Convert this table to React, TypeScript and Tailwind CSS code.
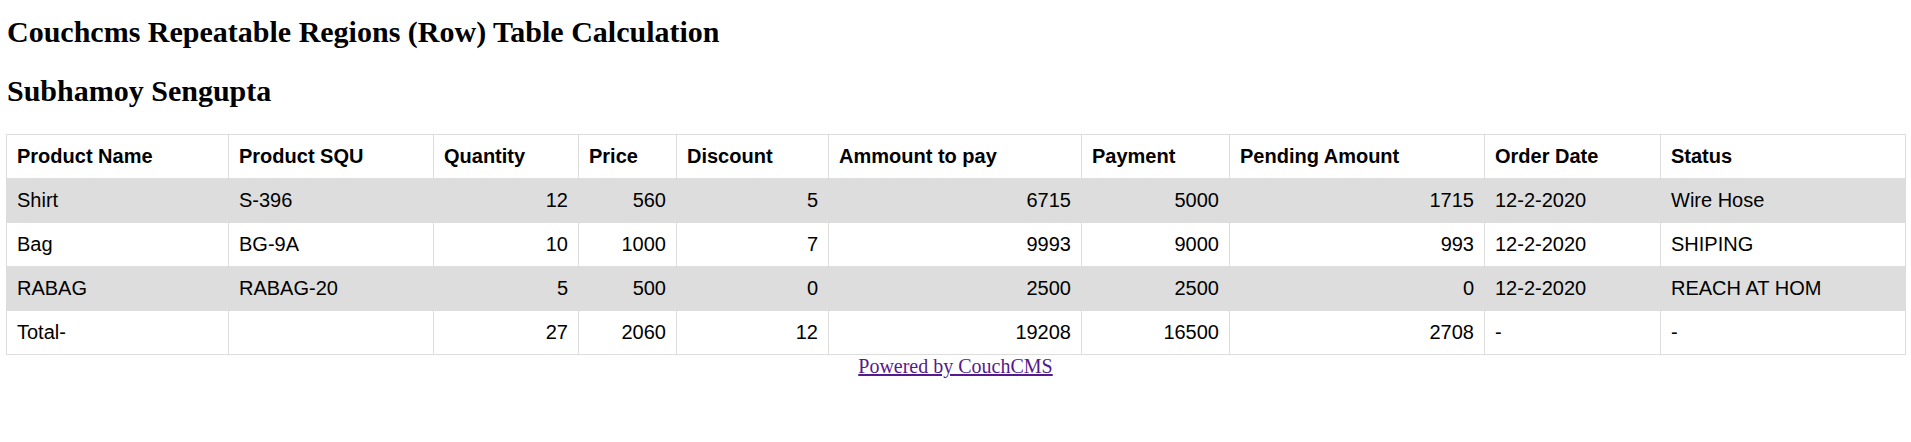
const colClasses = [
  'w-[222px]',
  'w-[205px]',
  'w-[145px]',
  'w-[98px]',
  'w-[152px]',
  'w-[253px]',
  'w-[148px]',
  'w-[255px]',
  'w-[176px]',
  'w-[245px]',
];

const headers = [
  'Product Name',
  'Product SQU',
  'Quantity',
  'Price',
  'Discount',
  'Ammount to pay',
  'Payment',
  'Pending Amount',
  'Order Date',
  'Status',
];

const rows = [
  ['Shirt', 'S-396', '12', '560', '5', '6715', '5000', '1715', '12-2-2020', 'Wire Hose'],
  ['Bag', 'BG-9A', '10', '1000', '7', '9993', '9000', '993', '12-2-2020', 'SHIPING'],
  ['RABAG', 'RABAG-20', '5', '500', '0', '2500', '2500', '0', '12-2-2020', 'REACH AT HOM'],
  ['Total-', '', '27', '2060', '12', '19208', '16500', '2708', '-', '-'],
];

// numeric columns are right aligned
const isNum = (i: number) => i >= 2 && i <= 7;

export default function App() {
  return (
    <div className="min-h-screen bg-white px-[6px] text-black">
      <h2 className="mt-[15px] mb-[25px] px-px font-['Liberation_Serif',serif] text-[30px] font-bold leading-[normal]">
        Couchcms Repeatable Regions (Row) Table Calculation
      </h2>
      <h2 className="mb-[26px] px-px font-['Liberation_Serif',serif] text-[30px] font-bold leading-[normal]">
        Subhamoy Sengupta
      </h2>

      <table className="w-[1899px] table-fixed border-collapse border border-[#dddddd] font-['Liberation_Sans',Arial,sans-serif] text-[20px] leading-[23px]">
        <colgroup>
          {colClasses.map((c, i) => (
            <col key={i} className={c} />
          ))}
        </colgroup>
        <thead>
          <tr>
            {headers.map(h => (
              <th
                key={h}
                className="border border-[#dddddd] p-[10px] text-left font-bold whitespace-nowrap"
              >
                {h}
              </th>
            ))}
          </tr>
        </thead>
        <tbody>
          {rows.map((r, ri) => (
            <tr key={ri} className={ri === 0 || ri === 2 ? 'bg-[#dddddd]' : 'bg-white'}>
              {r.map((c, ci) => (
                <td
                  key={ci}
                  className={
                    'border border-[#dddddd] p-[10px] whitespace-nowrap ' +
                    (isNum(ci) ? 'text-right' : 'text-left')
                  }
                >
                  {c}
                </td>
              ))}
            </tr>
          ))}
        </tbody>
      </table>

      <div className="text-center font-['Liberation_Serif',serif] text-[20px] leading-[normal]">
        <a href="#" className="text-[#551a8b] underline">
          Powered by CouchCMS
        </a>
      </div>
    </div>
  );
}
